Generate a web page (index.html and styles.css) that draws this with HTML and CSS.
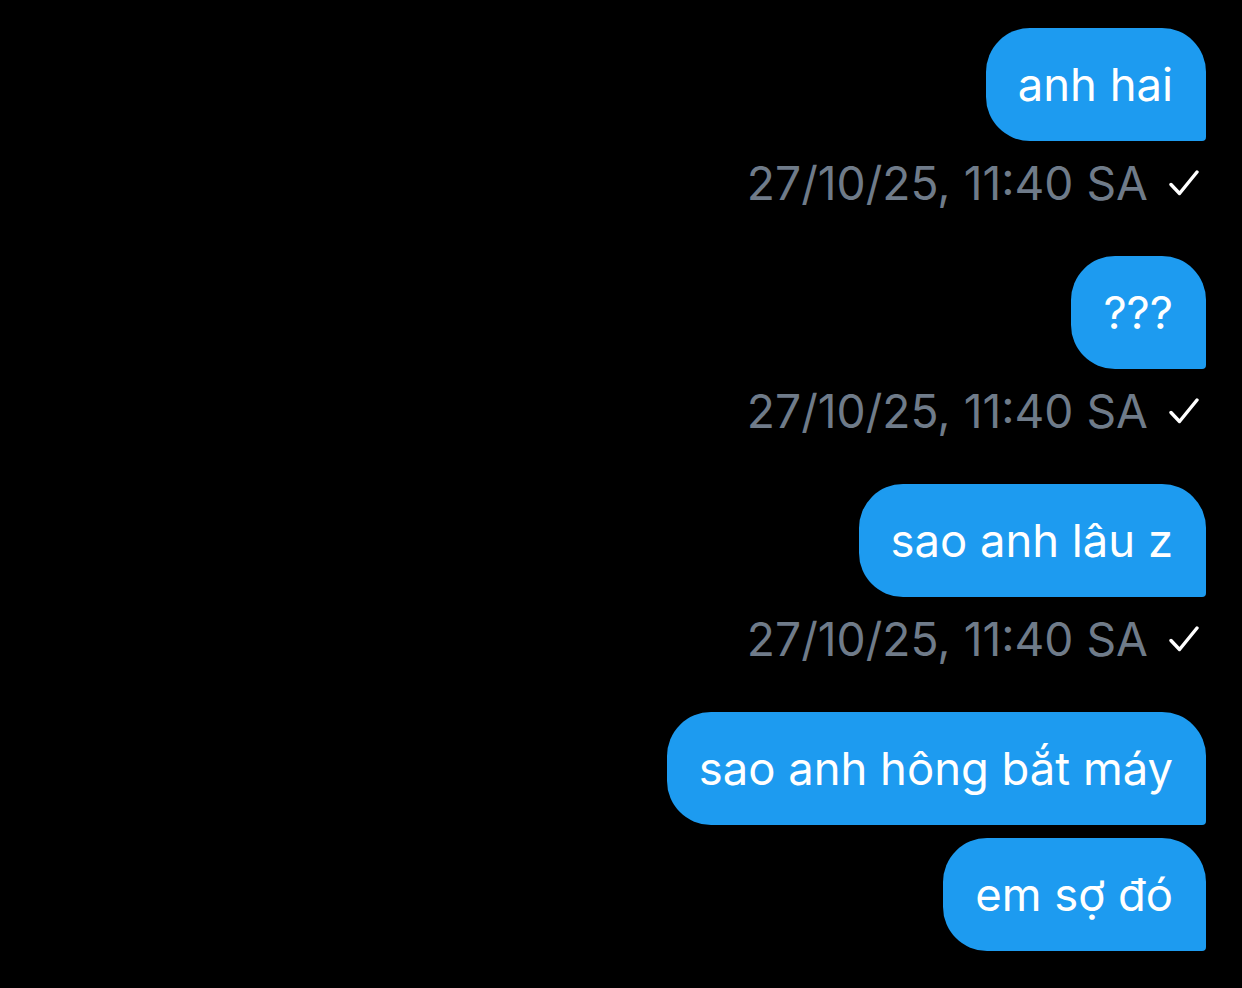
FILE: index.html
```html
<!DOCTYPE html>
<html lang="vi">
<head>
<meta charset="utf-8">
<link rel="stylesheet" href="styles.css">
</head>
<body>
<main class="thread">
  <div class="group">
    <div class="bubble">anh hai</div>
    <div class="meta"><span class="time">27/10/25, 11:40 SA</span><svg class="check" viewBox="0 0 30 28" width="30" height="28"><path d="M2 15.5 L10.5 24.5 L28 3" fill="none" stroke="#fff" stroke-width="3.4" stroke-linecap="round" stroke-linejoin="round"/></svg></div>
  </div>
  <div class="group">
    <div class="bubble">???</div>
    <div class="meta"><span class="time">27/10/25, 11:40 SA</span><svg class="check" viewBox="0 0 30 28" width="30" height="28"><path d="M2 15.5 L10.5 24.5 L28 3" fill="none" stroke="#fff" stroke-width="3.4" stroke-linecap="round" stroke-linejoin="round"/></svg></div>
  </div>
  <div class="group">
    <div class="bubble">sao anh lâu z</div>
    <div class="meta"><span class="time">27/10/25, 11:40 SA</span><svg class="check" viewBox="0 0 30 28" width="30" height="28"><path d="M2 15.5 L10.5 24.5 L28 3" fill="none" stroke="#fff" stroke-width="3.4" stroke-linecap="round" stroke-linejoin="round"/></svg></div>
  </div>
  <div class="group stack">
    <div class="bubble">sao anh hông bắt máy</div>
    <div class="bubble">em sợ đó</div>
  </div>
</main>
</body>
</html>
```
FILE: styles.css
```css
html, body {
  margin: 0;
  padding: 0;
  background: #000;
}
body {
  font-family: Inter, "Noto Sans", "Liberation Sans", sans-serif;
  -webkit-font-smoothing: antialiased;
}
.thread {
  display: flex;
  flex-direction: column;
  align-items: flex-end;
  padding: 28px 36px 0 0;
}
.group {
  display: flex;
  flex-direction: column;
  align-items: flex-end;
  margin-bottom: 43px;
}
.stack {
  gap: 13px;
}
.bubble {
  background: #1d9bf0;
  color: #fff;
  font-size: 45.4px;
  line-height: 61px;
  padding: 26px 33px 26px 32px;
  border-radius: 44px 44px 4px 44px;
  white-space: nowrap;
}
.meta {
  display: flex;
  align-items: center;
  gap: 21px;
  height: 60px;
  margin-top: 12px;
  padding-right: 7px;
}
.time {
  color: #6f7b89;
  font-size: 46.2px;
  line-height: 60px;
}
.check {
  display: block;
}
```
